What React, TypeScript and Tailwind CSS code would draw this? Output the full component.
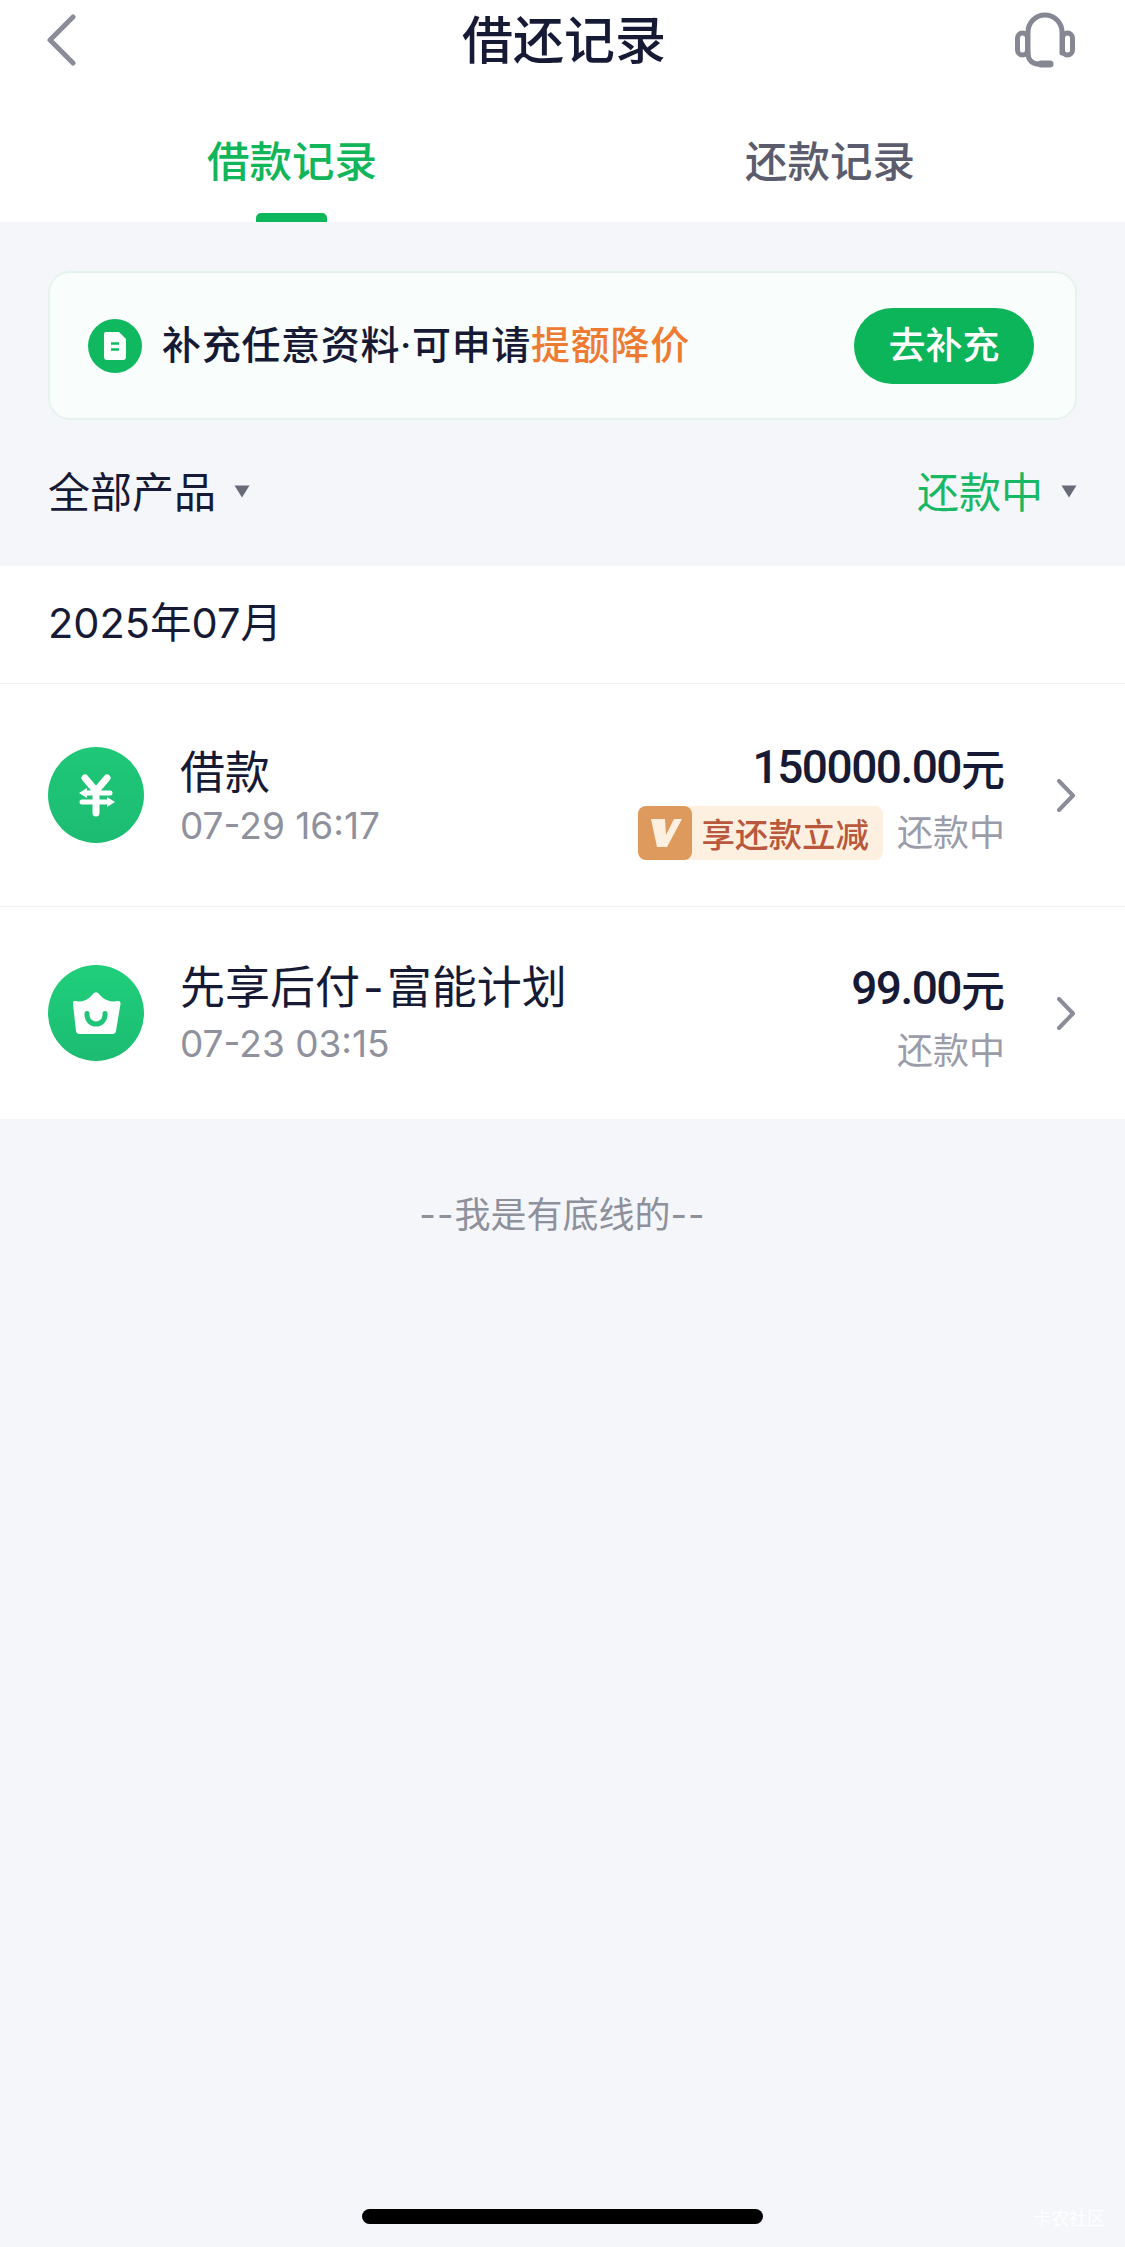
export default function App() {
  const rows = [
    { h: 'h-[223px] border-b border-[#f2f3f6]', icon: <YenIcon />, title: <>借款</>, date: '07-29 16:17', amount: '150000.00', badge: true, left: 'pt-[4px]', col: 'pt-[4px]', gap: 'mt-[6px]' },
    { h: 'h-[212px]', icon: <BasketIcon />, title: <>先享后付<span className="mx-[3px] font-['Inter',sans-serif]">-</span>富能计划</>, date: '07-23 03:15', amount: '99.00', badge: false, left: 'pt-[1px]', col: 'pt-[7px]', gap: 'mt-[3px]' },
  ];
  return (
    <div lang="zh-CN" className="relative flex h-[2247px] w-[1125px] flex-col overflow-hidden bg-[#f4f6fa] font-['Noto_Sans_CJK_SC',sans-serif] text-[#171a35]">
      <header className="bg-white">
        <div className="grid h-[80px] grid-cols-[1fr_auto_1fr] items-center pl-[45px] pr-[50px]">
          <svg width="32" height="52" viewBox="0 0 32 52" fill="none" stroke="#8a8c98" strokeWidth="5" strokeLinecap="round" strokeLinejoin="round">
            <path d="M28 3 L5 26 L28 49" />
          </svg>
          <h1 className="pb-[5px] pl-[8px] text-[51px] leading-[75px] font-medium">借还记录</h1>
          <svg className="justify-self-end" width="60" height="58" viewBox="0 0 60 58" fill="none" stroke="#858792" strokeWidth="5" strokeLinecap="round">
            <rect x="2.5" y="22" width="10" height="22" rx="5" />
            <rect x="47.5" y="22" width="10" height="22" rx="5" />
            <path d="M13 42 V21 a17 17 0 0 1 34 0 V42" />
            <path d="M13 42 C13 50 18 53 24 53 H35" />
            <path d="M26 53 H35" strokeWidth="7" />
          </svg>
        </div>
        <div className="flex h-[142px]">
          <div className="relative flex w-[584px] justify-center pt-[49px]">
            <span className="text-[42.5px] leading-[60px] font-medium text-[#10b659]">借款记录</span>
            <span className="absolute bottom-0 left-[256px] h-[9px] w-[71px] rounded-t-[5px] bg-[#0cb65a]" />
          </div>
          <div className="flex w-[492px] justify-center pt-[49px]">
            <span className="text-[42.5px] leading-[60px] font-medium text-[#5b5d6e]">还款记录</span>
          </div>
        </div>
      </header>

      <section className="mx-[48px] mt-[49px] flex h-[149px] items-center rounded-[22px] border-2 border-[#e6f3ed] bg-[#f9fefc] pl-[38px] pr-[41px]">
        <DocBadge />
        <p className="ml-[20px] flex-1 pb-[4px] text-[39px] leading-[54px] font-medium tracking-[0.7px] whitespace-nowrap">
          补充任意资料<span className="font-['Roboto',sans-serif]">·</span>可申请<span className="text-[#ee7b31]">提额降价</span>
        </p>
        <button className="h-[76px] w-[180px] rounded-full bg-[#0cb45a] pb-[5px] text-[37px] leading-[60px] font-medium text-white">去补充</button>
      </section>

      <div className="mx-[48px] flex h-[146px] items-center justify-between pb-[7px]">
        <div className="flex items-center">
          <span className="text-[42px] leading-[60px]">全部产品</span>
          <Caret className="mt-[3px] ml-[18px]" />
        </div>
        <div className="flex items-center">
          <span className="text-[42px] leading-[60px] text-[#18b865]">还款中</span>
          <Caret className="mt-[3px] ml-[18px]" />
        </div>
      </div>

      <section className="bg-white">
        <div className="flex h-[118px] items-center border-b border-[#f2f3f6] px-[48px] pb-[2px] font-['Inter','Noto_Sans_CJK_SC',sans-serif] text-[41.5px]">2025年07月</div>
        {rows.map((r) => (
          <div key={r.date} className={`flex items-center pl-[48px] pr-[50px] ${r.h}`}>
            {r.icon}
            <div className={`ml-[36px] flex flex-col ${r.left}`}>
              <span className="text-[45px] leading-[54px]">{r.title}</span>
              <span className="mt-[4px] font-['Inter',sans-serif] text-[37px] leading-[50px] text-[#8f919d]">{r.date}</span>
            </div>
            <div className={`ml-auto flex flex-col items-end ${r.col}`}>
              <span className="flex h-[60px] items-center">
                <span className="font-['Roboto',sans-serif] text-[46px] leading-[60px] font-medium tracking-[-1.5px]">{r.amount}</span>
                <span className="text-[44px] leading-[60px] font-medium">元</span>
              </span>
              <div className={`flex h-[54px] items-center ${r.gap}`}>
                {r.badge && <VBadge />}
                <span className="text-[36px] leading-[54px] text-[#9a9ca9]">还款中</span>
              </div>
            </div>
            <svg className="ml-[52px]" width="18" height="33" viewBox="0 0 18 33" fill="none" stroke="#8a8c98" strokeWidth="4" strokeLinecap="round" strokeLinejoin="round">
              <path d="M2 2 L16 16.5 L2 31" />
            </svg>
          </div>
        ))}
      </section>

      <p className="mt-[68px] text-center text-[36px] leading-[50px] text-[#8e909c]"><span className="font-['Inter',sans-serif] tracking-[1px]">--</span>我是有底线的<span className="font-['Inter',sans-serif] tracking-[1px]">--</span></p>

      <div className="mt-auto mb-[23px] h-[15px] w-[401px] self-center rounded-full bg-black" />
      <span className="absolute right-[20px] bottom-[20px] text-[18px] leading-[20px] text-white">卡农社区</span>
    </div>
  );
}

function Caret({ className }: { className: string }) {
  return (
    <svg className={className} width="16" height="13" viewBox="0 0 16 13" fill="#686a78">
      <path d="M0.5 0.5 H15.5 L8 12.5 Z" />
    </svg>
  );
}

function DocBadge() {
  return (
    <svg width="54" height="54" viewBox="0 0 54 54" className="shrink-0">
      <circle cx="27" cy="27" r="27" fill="#10b860" />
      <path d="M18 13 H31 L38 20 V38 a3 3 0 0 1 -3 3 H19 a3 3 0 0 1 -3 -3 V15 a2 2 0 0 1 2 -2 Z" fill="#fbfefc" />
      <path d="M23 24.5 H31 M23 30.5 H31" stroke="#10b860" strokeWidth="2.6" />
    </svg>
  );
}

function YenIcon() {
  return (
    <svg width="96" height="96" viewBox="0 0 96 96" className="shrink-0">
      <defs>
        <linearGradient id="g1" x1="0" y1="0" x2="0" y2="1">
          <stop offset="0" stopColor="#1fc878" />
          <stop offset="1" stopColor="#1cbc72" />
        </linearGradient>
      </defs>
      <circle cx="48" cy="48" r="48" fill="url(#g1)" />
      <path d="M37 31 L48 44 L59 31 M48 44 V66" fill="none" stroke="#fff" strokeWidth="7" strokeLinecap="round" strokeLinejoin="round" />
      <path d="M37 46 H62 M34 55 H60" fill="none" stroke="#fff" strokeWidth="5" strokeLinecap="round" />
      <path d="M31 46 L39 41 V51 Z M67 55 L59 50 V60 Z" fill="#fff" />
    </svg>
  );
}

function BasketIcon() {
  return (
    <svg width="96" height="96" viewBox="0 0 96 96" className="shrink-0">
      <defs>
        <linearGradient id="g2" x1="0" y1="0" x2="0" y2="1">
          <stop offset="0" stopColor="#1fcf7b" />
          <stop offset="1" stopColor="#1cbc72" />
        </linearGradient>
      </defs>
      <circle cx="48" cy="48" r="48" fill="url(#g2)" />
      <path d="M27 36 C33 37 37 36 41 33 L46 28 Q48 26.5 50 28 L55 33 C59 36 64 37 70 36 Q73 36 72.5 39 L68 66 Q67.5 69 64.5 69 H31.5 Q28.5 69 28 66 L25 39 Q24.5 36 27 36 Z" fill="#fff" />
      <path d="M39 48.5 V50 a9 9 0 0 0 18 0 V48.5" fill="none" stroke="#1fc478" strokeWidth="5" strokeLinecap="round" />
    </svg>
  );
}

function VBadge() {
  return (
    <div className="mt-[6px] mr-[14px] flex h-[54px] items-center rounded-[8px] bg-[#fdf0e0] pr-[14px]">
      <svg width="54" height="54" viewBox="0 0 54 54" className="shrink-0">
        <rect width="54" height="54" rx="8" fill="#de9a5c" />
        <path d="M13 13 H27 L28 29 L36 13 H44 L29 41 H19 Z" fill="#fdf0e0" />
      </svg>
      <span className="ml-[9px] text-[33.5px] leading-[54px] font-medium text-[#b9583c]">享还款立减</span>
    </div>
  );
}
